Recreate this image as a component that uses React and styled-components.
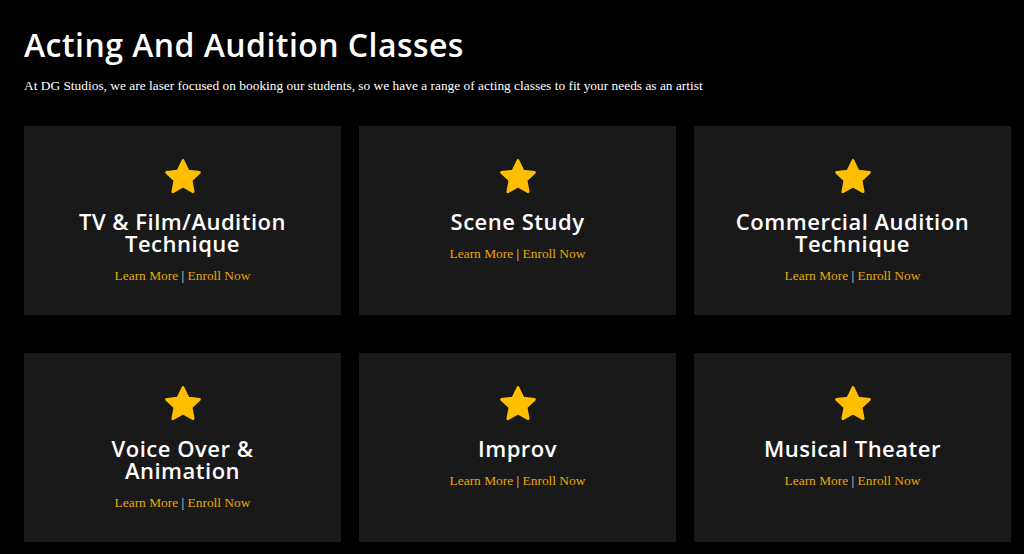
import React from 'react';
import styled, { createGlobalStyle } from 'styled-components';

const GlobalStyle = createGlobalStyle`
  html, body {
    margin: 0;
    padding: 0;
    background: #000;
  }
`;

const Page = styled.div`
  background: #000;
  min-height: 554px;
  padding: 25px 12px 12px 24px;
  box-sizing: border-box;
`;

const Heading = styled.h1`
  margin: 0;
  color: #fff;
  font-family: 'Open Sans', sans-serif;
  font-weight: 600;
  font-size: 32px;
  line-height: 40px;
  letter-spacing: 0.45px;
`;

const Intro = styled.p`
  margin: 12px 0 0;
  color: #fff;
  font-family: 'Liberation Serif', serif;
  font-size: 13.4px;
  line-height: 18px;
`;

const Grid = styled.div`
  margin-top: 31px;
  display: grid;
  grid-template-columns: repeat(3, 317px);
  column-gap: 18px;
  row-gap: 38px;
`;

const Card = styled.div`
  background: #191919;
  height: 189px;
  padding-top: 30px;
  box-sizing: border-box;
  display: flex;
  flex-direction: column;
  align-items: center;
  text-align: center;
`;

const Title = styled.h3`
  margin: 12px 0 0;
  color: #fff;
  font-family: 'Open Sans', sans-serif;
  font-weight: 600;
  font-size: 22px;
  line-height: 22px;
  letter-spacing: 0.5px;
  max-width: 260px;
`;

const Links = styled.div`
  margin-top: 13px;
  font-family: 'Liberation Serif', serif;
  font-size: 13.4px;
  line-height: 18px;
  color: #ddd;
`;

const Link = styled.a`
  color: #e6a800;
  text-decoration: none;
`;

const Star = () => (
  <svg width="42" height="42" viewBox="0 0 24 24">
    <path
      d="M12 2.6l2.9 6 6.5.8-4.8 4.5 1.2 6.5L12 17.2l-5.8 3.2 1.2-6.5-4.8-4.5 6.5-.8z"
      fill="#ffbf00"
      stroke="#ffbf00"
      strokeWidth="1.6"
      strokeLinejoin="round"
    />
  </svg>
);

const classes = [
  'TV & Film/Audition Technique',
  'Scene Study',
  'Commercial Audition Technique',
  'Voice Over & Animation',
  'Improv',
  'Musical Theater',
];

export default function App() {
  return (
    <>
      <GlobalStyle />
      <Page>
        <Heading>Acting And Audition Classes</Heading>
        <Intro>
          At DG Studios, we are laser focused on booking our students, so we have a range of acting
          classes to fit your needs as an artist
        </Intro>
        <Grid>
          {classes.map((name) => (
            <Card key={name}>
              <Star />
              <Title>{name}</Title>
              <Links>
                <Link href="#">Learn More</Link> | <Link href="#">Enroll Now</Link>
              </Links>
            </Card>
          ))}
        </Grid>
      </Page>
    </>
  );
}
